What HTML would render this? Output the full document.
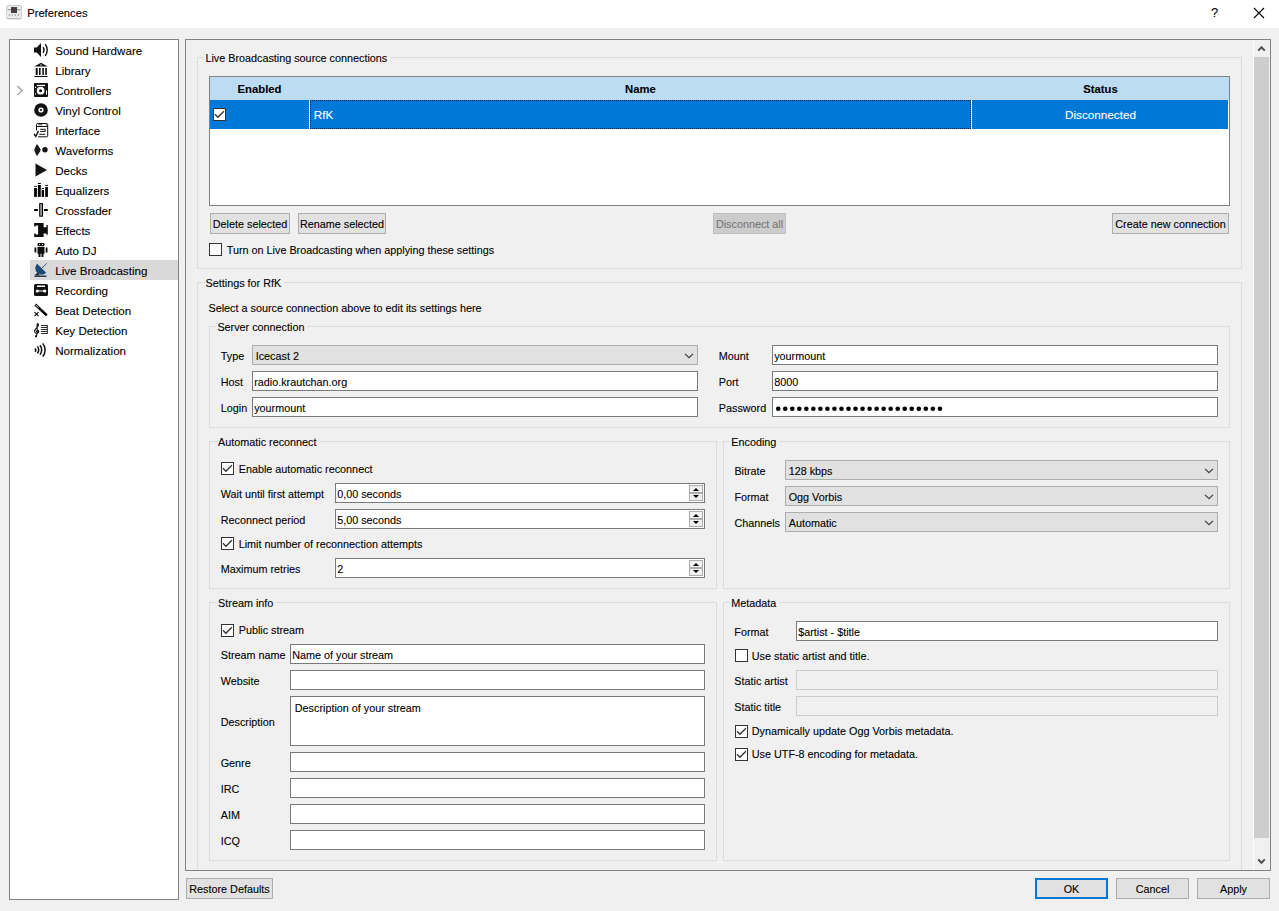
<!DOCTYPE html><html><head><meta charset="utf-8"><style>
html,body{margin:0;padding:0;width:1279px;height:911px;overflow:hidden;background:#f0f0f0;font-family:"Liberation Sans",sans-serif}
.t{position:absolute;white-space:nowrap;line-height:16px;font-size:10.8px;color:#000;-webkit-text-stroke:0.1px currentColor}
.r{position:absolute;box-sizing:border-box}
</style></head><body>
<div class="r" style="left:0px;top:0px;width:1279px;height:28px;background:#fff;"></div>
<svg class="r" style="left:6px;top:5px" width="16" height="15" viewBox="0 0 16 15"><rect x="0.5" y="0.5" width="15" height="13.5" rx="1.5" fill="#ececec" stroke="#d0d0d0"/><path d="M1 13.5h14" stroke="#bdbdbd" stroke-width="1"/><rect x="5" y="2" width="6" height="6" fill="#4a3e42"/><path d="M1.5 4.7h3.5M11 4.7h3.5" stroke="#8a8a8a" stroke-width="1"/><path d="M3.3 9.3v1.6M6.3 9.3v1.6M9.3 9.3v1.6M12.3 9.3v1.6" stroke="#8f8f8f"/></svg>
<div class="t" style="left:27.2px;top:5px;font-size:11.2px;color:#000;">Preferences</div>
<div class="t" style="left:1211.1px;top:5px;font-size:13px;color:#000;">?</div>
<svg class="r" style="left:1253px;top:7px" width="12" height="12" viewBox="0 0 12 12"><path d="M1 1 L11 11 M11 1 L1 11" stroke="#000" stroke-width="1.1"/></svg>
<div class="r" style="left:9px;top:39px;width:170px;height:861px;background:#fff;border:1px solid #828282;"></div>
<div class="r" style="left:30px;top:260px;width:148px;height:20px;background:#d9d9d9;"></div>
<div class="t" style="left:55.2px;top:43px;font-size:11.6px;color:#000;">Sound Hardware</div>
<div class="t" style="left:55.2px;top:63px;font-size:11.6px;color:#000;">Library</div>
<div class="t" style="left:55.2px;top:83px;font-size:11.6px;color:#000;">Controllers</div>
<div class="t" style="left:55.2px;top:103px;font-size:11.6px;color:#000;">Vinyl Control</div>
<div class="t" style="left:55.2px;top:123px;font-size:11.6px;color:#000;">Interface</div>
<div class="t" style="left:55.2px;top:143px;font-size:11.6px;color:#000;">Waveforms</div>
<div class="t" style="left:55.2px;top:163px;font-size:11.6px;color:#000;">Decks</div>
<div class="t" style="left:55.2px;top:183px;font-size:11.6px;color:#000;">Equalizers</div>
<div class="t" style="left:55.2px;top:203px;font-size:11.6px;color:#000;">Crossfader</div>
<div class="t" style="left:55.2px;top:223px;font-size:11.6px;color:#000;">Effects</div>
<div class="t" style="left:55.2px;top:243px;font-size:11.6px;color:#000;">Auto DJ</div>
<div class="t" style="left:55.2px;top:263px;font-size:11.6px;color:#000;">Live Broadcasting</div>
<div class="t" style="left:55.2px;top:283px;font-size:11.6px;color:#000;">Recording</div>
<div class="t" style="left:55.2px;top:303px;font-size:11.6px;color:#000;">Beat Detection</div>
<div class="t" style="left:55.2px;top:323px;font-size:11.6px;color:#000;">Key Detection</div>
<div class="t" style="left:55.2px;top:343px;font-size:11.6px;color:#000;">Normalization</div>
<svg class="r" style="left:16px;top:85px" width="8" height="11" viewBox="0 0 8 11"><path d="M1.5 1 L6 5.5 L1.5 10" fill="none" stroke="#a6a6a6" stroke-width="1.5"/></svg>
<svg class="r" style="left:34px;top:43px;overflow:visible" width="14" height="14" viewBox="0 0 14 14"><path d="M0 4.6h2.7l4.3-4.6v14l-4.3-4.6h-2.7z" fill="#111"/><path d="M9.1 4.2q1.8 2.8 0 5.6M11.3 1.2q3.8 5.8 0 11.6" fill="none" stroke="#111" stroke-width="1.4"/></svg>
<svg class="r" style="left:34px;top:63px;overflow:visible" width="14" height="14" viewBox="0 0 14 14"><path d="M7 -0.2 L0.2 3.6 H13.8 Z" fill="#111"/><rect x="6.3" y="1.4" width="1.4" height="1.2" fill="#ddd"/><rect x="1.7" y="5" width="2" height="7" fill="#111"/><rect x="5" y="5" width="1.6" height="7" fill="#111"/><rect x="8.3" y="5" width="1.6" height="7" fill="#111"/><rect x="11.2" y="5" width="1.7" height="7" fill="#111"/><rect x="0.5" y="13" width="13" height="1" fill="#000"/></svg>
<svg class="r" style="left:34px;top:83px;overflow:visible" width="14" height="14" viewBox="0 0 14 14"><rect x="0" y="0" width="14" height="14" rx="0.8" fill="#111"/><rect x="3" y="1.8" width="8" height="1.3" fill="#fff"/><circle cx="6.6" cy="7.7" r="3.9" fill="#fff"/><circle cx="6.6" cy="7.7" r="1.5" fill="#111"/><rect x="1" y="3.8" width="1" height="1.2" fill="#fff"/><rect x="1" y="10.4" width="1" height="1.3" fill="#fff"/><rect x="12" y="7.4" width="1" height="4.3" fill="#fff"/></svg>
<svg class="r" style="left:34px;top:103px;overflow:visible" width="14" height="14" viewBox="0 0 14 14"><circle cx="7" cy="7" r="6.8" fill="#111"/><circle cx="7" cy="7" r="2.6" fill="#fff"/><circle cx="7" cy="7" r="1.1" fill="#111"/></svg>
<svg class="r" style="left:34px;top:123px;overflow:visible" width="14" height="14" viewBox="0 0 14 14"><path d="M2.5 7.4 V1.5 Q2.5 0.5 3.5 0.5 H12.7 Q13.7 0.5 13.7 1.5 V12.8 Q13.7 13.8 12.7 13.8 H4" fill="none" stroke="#111" stroke-width="1"/><path d="M2.5 3.5h11.2" stroke="#111" stroke-width="1"/><path d="M4.2 1.8h4.2" stroke="#111" stroke-width="0.8"/><circle cx="12.3" cy="1.9" r="0.6" fill="#111"/><path d="M6.2 6.3h5v2.1h-5M5.3 11.3h6" fill="none" stroke="#111" stroke-width="1"/><path d="M0.1 11 L1.8 13.4 L4.5 7.9" fill="none" stroke="#111" stroke-width="1.4"/></svg>
<svg class="r" style="left:34px;top:143px;overflow:visible" width="14" height="14" viewBox="0 0 14 14"><path d="M3 1 C1.4 4 0.3 6 0.4 7 C0.3 8 1.4 10 3 13.2 C4.6 10.5 6.6 8.2 6.7 7 C6.6 5.8 4.6 3.5 3 1 Z" fill="#1a1a1a"/><circle cx="11" cy="6.8" r="2.7" fill="#111"/></svg>
<svg class="r" style="left:34px;top:163px;overflow:visible" width="14" height="14" viewBox="0 0 14 14"><path d="M1.5 0.5L13 7 1.5 13.5z" fill="#111"/></svg>
<svg class="r" style="left:34px;top:183px;overflow:visible" width="14" height="14" viewBox="0 0 14 14"><rect x="0.1" y="5" width="2.8" height="8.9" fill="#000"/><rect x="0.1" y="2.9" width="2.8" height="0.9" fill="#000"/><rect x="3.9" y="2" width="2.9" height="11.9" fill="#000"/><rect x="3.9" y="0" width="2.9" height="1" fill="#000"/><rect x="7.8" y="7.1" width="2.2" height="6.8" fill="#000"/><rect x="7.8" y="5" width="2.2" height="1" fill="#000"/><rect x="6.8" y="6" width="1" height="7.9" fill="#999"/><rect x="11.2" y="4" width="2.7" height="9.9" fill="#000"/><rect x="11.2" y="1.9" width="2.7" height="1" fill="#000"/></svg>
<svg class="r" style="left:34px;top:203px;overflow:visible" width="14" height="14" viewBox="0 0 14 14"><rect x="0.2" y="6" width="3.7" height="2" fill="#000"/><rect x="10" y="6" width="3.8" height="2" fill="#000"/><rect x="5.7" y="0.6" width="2.8" height="12.6" fill="#9a9a9a" stroke="#000" stroke-width="1"/></svg>
<svg class="r" style="left:34px;top:223px;overflow:visible" width="14" height="14" viewBox="0 0 14 14"><path d="M0.2 0 H9.6 V4.2 H12.5 V2 H13.8 V11.7 H12.5 V10.4 H9.6 V13.9 H0.2 V10.4 H1.7 V11.4 H4.1 V2.5 H1.7 V3.6 H0.2 Z" fill="#0d0d0d"/></svg>
<svg class="r" style="left:34px;top:243px;overflow:visible" width="14" height="14" viewBox="0 0 14 14"><rect x="3.5" y="0" width="7" height="3" rx="1" fill="#111"/><rect x="3.5" y="3.8" width="7" height="7" fill="#111"/><rect x="0.5" y="4.5" width="1.8" height="5" fill="#111"/><rect x="11.7" y="4.5" width="1.8" height="5" fill="#111"/><rect x="4.5" y="10" width="2" height="4" fill="#111"/><rect x="7.5" y="10" width="2" height="4" fill="#111"/><rect x="5" y="1" width="1" height="1" fill="#ddd"/><rect x="8" y="1" width="1" height="1" fill="#ddd"/></svg>
<svg class="r" style="left:34px;top:263px;overflow:visible" width="14" height="14" viewBox="0 0 14 14"><path d="M3.2 0.8 A6.3 6.3 0 0 0 12.2 9.8 Z" fill="#1b4a77"/><path d="M7.7 5.3 L12.8 0.3" stroke="#3a4a5a" stroke-width="0.9"/><path d="M0.5 13.2h12" stroke="#152535" stroke-width="1.3"/><path d="M0.5 12.6 L3.5 9.6 L6 12.6 z" fill="#152535"/></svg>
<svg class="r" style="left:34px;top:283px;overflow:visible" width="14" height="14" viewBox="0 0 14 14"><rect x="0" y="1" width="14" height="12" rx="1.5" fill="#111"/><rect x="3" y="2.5" width="8" height="1.5" fill="#fff"/><circle cx="3.3" cy="8" r="1.6" fill="#fff"/><circle cx="10.7" cy="8" r="1.6" fill="#fff"/><rect x="4" y="7.5" width="6" height="1" fill="#fff"/></svg>
<svg class="r" style="left:34px;top:303px;overflow:visible" width="14" height="14" viewBox="0 0 14 14"><path d="M1.2 1.5 L12.8 12.4" stroke="#000" stroke-width="2.6"/><path d="M1.6 1.9 L4.6 4.7" stroke="#fff" stroke-width="0.9"/><path d="M0.5 9.2 L4.5 13.2 M4.5 9.2 L0.5 13.2" stroke="#000" stroke-width="1.1"/></svg>
<svg class="r" style="left:34px;top:323px;overflow:visible" width="14" height="14" viewBox="0 0 14 14"><path d="M6.9 2.5h6.6M6.9 4.5h6.6M6.9 6.5h6.6M6.9 8.5h6.6M6.9 10.5h6.6M13.3 2v9" stroke="#1a1a1a" stroke-width="0.9"/><path d="M2.3 14.2 C3.6 10 3.4 5 3 3 C2.8 0.8 4.3 -0.3 4.5 1.8 C4.7 4 0.4 5.5 0.6 8.5 C0.8 11 4.8 11 4.7 8.4 C4.6 6.8 2.4 6.9 2.5 8.6" fill="none" stroke="#111" stroke-width="1.1"/><circle cx="1.9" cy="13.3" r="1" fill="#111"/></svg>
<svg class="r" style="left:34px;top:343px;overflow:visible" width="14" height="14" viewBox="0 0 14 14"><path d="M1 5.4 q1.6 1.65 0 3.3 M3.4 3.4 q2.6 3.5 0 7 M6 2.3 q3.4 4.7 0 9.4 M8.8 0.3 q4.6 6.7 0 13.4" fill="none" stroke="#111" stroke-width="1.5"/></svg>
<div class="r" style="left:185px;top:39px;width:1086px;height:832px;background:#f0f0f0;border:1px solid #828282;"></div>
<div class="r" style="left:1253px;top:40px;width:1px;height:830px;background:#fff;"></div>
<div class="r" style="left:1254px;top:57px;width:15px;height:781px;background:#cdcdcd;"></div>
<svg class="r" style="left:1257px;top:45px" width="9" height="7" viewBox="0 0 9 7"><path d="M1.2 5.6 L4.5 2.2 L7.8 5.6" fill="none" stroke="#505050" stroke-width="2"/></svg>
<svg class="r" style="left:1257px;top:858px" width="9" height="7" viewBox="0 0 9 7"><path d="M1.2 1.4 L4.5 4.8 L7.8 1.4" fill="none" stroke="#505050" stroke-width="2"/></svg>
<div class="r" style="left:197px;top:57px;width:1045px;height:212px;background:none;border:1px solid #dcdcdc;"></div>
<div class="t" style="left:204.4px;top:50px;font-size:10.8px;background:#f0f0f0;padding:0 3px 0 1px">Live Broadcasting source connections</div>
<div class="r" style="left:209px;top:76px;width:1021px;height:130px;background:#fff;border:1px solid #828282;"></div>
<div class="r" style="left:210px;top:77px;width:1019px;height:23px;background:#bcdcf4;"></div>
<div class="r" style="left:210px;top:100px;width:1018px;height:29px;background:#0078d7;"></div>
<div class="r" style="left:309px;top:100px;width:1px;height:29px;background:#e8f2fb;"></div>
<div class="r" style="left:971px;top:100px;width:1px;height:29px;background:#e8f2fb;"></div>
<div class="r" style="left:310px;top:100px;width:661px;height:29px;border:1px dotted #10243a"></div>
<div class="t" style="left:210px;width:99px;text-align:center;top:81px;font-size:11.3px;color:#000;font-weight:bold;">Enabled</div>
<div class="t" style="left:310px;width:661px;text-align:center;top:81px;font-size:11.3px;color:#000;font-weight:bold;">Name</div>
<div class="t" style="left:972px;width:257px;text-align:center;top:81px;font-size:11.3px;color:#000;font-weight:bold;">Status</div>
<svg class="r" style="left:213px;top:108px" width="13" height="13" viewBox="0 0 13 13"><rect x="0.5" y="0.5" width="12" height="12" fill="#fff" stroke="#333"/><path d="M2 6.3 L4.9 9.3 L10.9 3.2" fill="none" stroke="#333" stroke-width="1.3"/></svg>
<div class="t" style="left:313.7px;top:107px;font-size:11.7px;color:#fff;">RfK</div>
<div class="t" style="left:972px;width:257px;text-align:center;top:107px;font-size:11.7px;color:#fff;">Disconnected</div>
<div class="r" style="left:210px;top:213px;width:80px;height:21px;background:#e1e1e1;border:1px solid #adadad;"></div>
<div class="t" style="left:210px;width:80px;text-align:center;top:216px;font-size:10.8px;color:#000;">Delete selected</div>
<div class="r" style="left:298px;top:213px;width:88px;height:21px;background:#e1e1e1;border:1px solid #adadad;"></div>
<div class="t" style="left:298px;width:88px;text-align:center;top:216px;font-size:10.8px;color:#000;">Rename selected</div>
<div class="r" style="left:713px;top:213px;width:73px;height:21px;background:#cccccc;border:1px solid #bfbfbf;"></div>
<div class="t" style="left:713px;width:73px;text-align:center;top:216px;font-size:10.8px;color:#767676;">Disconnect all</div>
<div class="r" style="left:1112px;top:213px;width:117px;height:21px;background:#e1e1e1;border:1px solid #adadad;"></div>
<div class="t" style="left:1112px;width:117px;text-align:center;top:216px;font-size:10.8px;color:#000;">Create new connection</div>
<svg class="r" style="left:209px;top:243px" width="13" height="13" viewBox="0 0 13 13"><rect x="0.5" y="0.5" width="12" height="12" fill="#fff" stroke="#333"/></svg>
<div class="t" style="left:226.8px;top:242px;font-size:10.8px;color:#000;">Turn on Live Broadcasting when applying these settings</div>
<div class="r" style="left:197px;top:282px;width:1045px;height:588px;background:none;border:1px solid #dcdcdc;border-bottom:none;"></div>
<div class="t" style="left:204.6px;top:275px;font-size:10.8px;background:#f0f0f0;padding:0 3px 0 1px">Settings for RfK</div>
<div class="t" style="left:208.5px;top:300px;font-size:10.8px;color:#000;">Select a source connection above to edit its settings here</div>
<div class="r" style="left:209px;top:326px;width:1021px;height:102px;background:none;border:1px solid #dcdcdc;"></div>
<div class="t" style="left:216.4px;top:319px;font-size:10.8px;background:#f0f0f0;padding:0 3px 0 1px">Server connection</div>
<div class="t" style="left:220.8px;top:348px;font-size:10.8px;color:#000;">Type</div>
<div class="r" style="left:252px;top:345px;width:446px;height:20px;background:#e1e1e1;border:1px solid #adadad;"></div>
<div class="t" style="left:255.7px;top:348px;font-size:10.8px;color:#000;">Icecast 2</div>
<svg class="r" style="left:684px;top:353px" width="10" height="6" viewBox="0 0 10 6"><path d="M1 0.9 L5 4.7 L9 0.9" fill="none" stroke="#404040" stroke-width="1.3"/></svg>
<div class="t" style="left:220.8px;top:374px;font-size:10.8px;color:#000;">Host</div>
<div class="r" style="left:252px;top:371px;width:446px;height:20px;background:#fff;border:1px solid #7a7a7a;"></div>
<div class="t" style="left:254.2px;top:374px;font-size:10.8px;color:#000;">radio.krautchan.org</div>
<div class="t" style="left:220.8px;top:400px;font-size:10.8px;color:#000;">Login</div>
<div class="r" style="left:252px;top:397px;width:446px;height:20px;background:#fff;border:1px solid #7a7a7a;"></div>
<div class="t" style="left:254.2px;top:400px;font-size:10.8px;color:#000;">yourmount</div>
<div class="t" style="left:718.8px;top:348px;font-size:10.8px;color:#000;">Mount</div>
<div class="r" style="left:772px;top:345px;width:446px;height:20px;background:#fff;border:1px solid #7a7a7a;"></div>
<div class="t" style="left:774.2px;top:348px;font-size:10.8px;color:#000;">yourmount</div>
<div class="t" style="left:718.8px;top:374px;font-size:10.8px;color:#000;">Port</div>
<div class="r" style="left:772px;top:371px;width:446px;height:20px;background:#fff;border:1px solid #7a7a7a;"></div>
<div class="t" style="left:774.2px;top:374px;font-size:10.8px;color:#000;">8000</div>
<div class="t" style="left:718.8px;top:400px;font-size:10.8px;color:#000;">Password</div>
<div class="r" style="left:772px;top:397px;width:446px;height:20px;background:#fff;border:1px solid #7a7a7a;"></div>
<svg class="r" style="left:0;top:0" width="1279" height="911"><circle cx="778.20" cy="408.7" r="2.3" fill="#000"/><circle cx="785.23" cy="408.7" r="2.3" fill="#000"/><circle cx="792.26" cy="408.7" r="2.3" fill="#000"/><circle cx="799.29" cy="408.7" r="2.3" fill="#000"/><circle cx="806.32" cy="408.7" r="2.3" fill="#000"/><circle cx="813.35" cy="408.7" r="2.3" fill="#000"/><circle cx="820.38" cy="408.7" r="2.3" fill="#000"/><circle cx="827.41" cy="408.7" r="2.3" fill="#000"/><circle cx="834.44" cy="408.7" r="2.3" fill="#000"/><circle cx="841.47" cy="408.7" r="2.3" fill="#000"/><circle cx="848.50" cy="408.7" r="2.3" fill="#000"/><circle cx="855.53" cy="408.7" r="2.3" fill="#000"/><circle cx="862.56" cy="408.7" r="2.3" fill="#000"/><circle cx="869.59" cy="408.7" r="2.3" fill="#000"/><circle cx="876.62" cy="408.7" r="2.3" fill="#000"/><circle cx="883.65" cy="408.7" r="2.3" fill="#000"/><circle cx="890.68" cy="408.7" r="2.3" fill="#000"/><circle cx="897.71" cy="408.7" r="2.3" fill="#000"/><circle cx="904.74" cy="408.7" r="2.3" fill="#000"/><circle cx="911.77" cy="408.7" r="2.3" fill="#000"/><circle cx="918.80" cy="408.7" r="2.3" fill="#000"/><circle cx="925.83" cy="408.7" r="2.3" fill="#000"/><circle cx="932.86" cy="408.7" r="2.3" fill="#000"/><circle cx="939.89" cy="408.7" r="2.3" fill="#000"/></svg>
<div class="r" style="left:209px;top:441px;width:508px;height:148px;background:none;border:1px solid #dcdcdc;"></div>
<div class="t" style="left:217.1px;top:434px;font-size:10.8px;background:#f0f0f0;padding:0 3px 0 1px">Automatic reconnect</div>
<svg class="r" style="left:221px;top:462px" width="13" height="13" viewBox="0 0 13 13"><rect x="0.5" y="0.5" width="12" height="12" fill="#fff" stroke="#333"/><path d="M2 6.3 L4.9 9.3 L10.9 3.2" fill="none" stroke="#333" stroke-width="1.3"/></svg>
<div class="t" style="left:238.7px;top:461px;font-size:10.8px;color:#000;">Enable automatic reconnect</div>
<div class="t" style="left:220.7px;top:486px;font-size:10.8px;color:#000;">Wait until first attempt</div>
<div class="r" style="left:335px;top:483px;width:370px;height:20px;background:#fff;border:1px solid #7a7a7a;"></div>
<div class="t" style="left:337.2px;top:486px;font-size:10.8px;color:#000;">0,00 seconds</div>
<div class="r" style="left:689px;top:485px;width:14px;height:8px;background:#f0f0f0;border:1px solid #adadad;box-sizing:border-box"></div>
<div class="r" style="left:689px;top:493px;width:14px;height:8px;background:#f0f0f0;border:1px solid #adadad;box-sizing:border-box"></div>
<svg class="r" style="left:689px;top:485px" width="14" height="16" viewBox="0 0 14 16"><path d="M4 6 L7 3 L10 6 Z" fill="#000"/><path d="M4 10 L7 13 L10 10 Z" fill="#000"/></svg>
<div class="t" style="left:220.7px;top:512px;font-size:10.8px;color:#000;">Reconnect period</div>
<div class="r" style="left:335px;top:509px;width:370px;height:20px;background:#fff;border:1px solid #7a7a7a;"></div>
<div class="t" style="left:337.2px;top:512px;font-size:10.8px;color:#000;">5,00 seconds</div>
<div class="r" style="left:689px;top:511px;width:14px;height:8px;background:#f0f0f0;border:1px solid #adadad;box-sizing:border-box"></div>
<div class="r" style="left:689px;top:519px;width:14px;height:8px;background:#f0f0f0;border:1px solid #adadad;box-sizing:border-box"></div>
<svg class="r" style="left:689px;top:511px" width="14" height="16" viewBox="0 0 14 16"><path d="M4 6 L7 3 L10 6 Z" fill="#000"/><path d="M4 10 L7 13 L10 10 Z" fill="#000"/></svg>
<svg class="r" style="left:221px;top:537px" width="13" height="13" viewBox="0 0 13 13"><rect x="0.5" y="0.5" width="12" height="12" fill="#fff" stroke="#333"/><path d="M2 6.3 L4.9 9.3 L10.9 3.2" fill="none" stroke="#333" stroke-width="1.3"/></svg>
<div class="t" style="left:238.7px;top:536px;font-size:10.8px;color:#000;">Limit number of reconnection attempts</div>
<div class="t" style="left:220.7px;top:561px;font-size:10.8px;color:#000;">Maximum retries</div>
<div class="r" style="left:335px;top:558px;width:370px;height:20px;background:#fff;border:1px solid #7a7a7a;"></div>
<div class="t" style="left:337.2px;top:561px;font-size:10.8px;color:#000;">2</div>
<div class="r" style="left:689px;top:560px;width:14px;height:8px;background:#f0f0f0;border:1px solid #adadad;box-sizing:border-box"></div>
<div class="r" style="left:689px;top:568px;width:14px;height:8px;background:#f0f0f0;border:1px solid #adadad;box-sizing:border-box"></div>
<svg class="r" style="left:689px;top:560px" width="14" height="16" viewBox="0 0 14 16"><path d="M4 6 L7 3 L10 6 Z" fill="#000"/><path d="M4 10 L7 13 L10 10 Z" fill="#000"/></svg>
<div class="r" style="left:723px;top:441px;width:507px;height:148px;background:none;border:1px solid #dcdcdc;"></div>
<div class="t" style="left:730.3px;top:434px;font-size:10.8px;background:#f0f0f0;padding:0 3px 0 1px">Encoding</div>
<div class="t" style="left:734.4px;top:463px;font-size:10.8px;color:#000;">Bitrate</div>
<div class="r" style="left:785px;top:460px;width:433px;height:20px;background:#e1e1e1;border:1px solid #adadad;"></div>
<div class="t" style="left:788.7px;top:463px;font-size:10.8px;color:#000;">128 kbps</div>
<svg class="r" style="left:1204px;top:468px" width="10" height="6" viewBox="0 0 10 6"><path d="M1 0.9 L5 4.7 L9 0.9" fill="none" stroke="#404040" stroke-width="1.3"/></svg>
<div class="t" style="left:734.4px;top:489px;font-size:10.8px;color:#000;">Format</div>
<div class="r" style="left:785px;top:486px;width:433px;height:20px;background:#e1e1e1;border:1px solid #adadad;"></div>
<div class="t" style="left:788.7px;top:489px;font-size:10.8px;color:#000;">Ogg Vorbis</div>
<svg class="r" style="left:1204px;top:494px" width="10" height="6" viewBox="0 0 10 6"><path d="M1 0.9 L5 4.7 L9 0.9" fill="none" stroke="#404040" stroke-width="1.3"/></svg>
<div class="t" style="left:734.4px;top:515px;font-size:10.8px;color:#000;">Channels</div>
<div class="r" style="left:785px;top:512px;width:433px;height:20px;background:#e1e1e1;border:1px solid #adadad;"></div>
<div class="t" style="left:788.7px;top:515px;font-size:10.8px;color:#000;">Automatic</div>
<svg class="r" style="left:1204px;top:520px" width="10" height="6" viewBox="0 0 10 6"><path d="M1 0.9 L5 4.7 L9 0.9" fill="none" stroke="#404040" stroke-width="1.3"/></svg>
<div class="r" style="left:209px;top:602px;width:508px;height:259px;background:none;border:1px solid #dcdcdc;"></div>
<div class="t" style="left:217.1px;top:595px;font-size:10.8px;background:#f0f0f0;padding:0 3px 0 1px">Stream info</div>
<svg class="r" style="left:221px;top:624px" width="13" height="13" viewBox="0 0 13 13"><rect x="0.5" y="0.5" width="12" height="12" fill="#fff" stroke="#333"/><path d="M2 6.3 L4.9 9.3 L10.9 3.2" fill="none" stroke="#333" stroke-width="1.3"/></svg>
<div class="t" style="left:238.7px;top:622px;font-size:10.8px;color:#000;">Public stream</div>
<div class="t" style="left:220.7px;top:647px;font-size:10.8px;color:#000;">Stream name</div>
<div class="r" style="left:290px;top:644px;width:415px;height:20px;background:#fff;border:1px solid #7a7a7a;"></div>
<div class="t" style="left:292.2px;top:647px;font-size:10.8px;color:#000;">Name of your stream</div>
<div class="t" style="left:220.7px;top:673px;font-size:10.8px;color:#000;">Website</div>
<div class="r" style="left:290px;top:670px;width:415px;height:20px;background:#fff;border:1px solid #7a7a7a;"></div>
<div class="t" style="left:220.7px;top:714px;font-size:10.8px;color:#000;">Description</div>
<div class="r" style="left:290px;top:696px;width:415px;height:50px;background:#fff;border:1px solid #7a7a7a;"></div>
<div class="t" style="left:294.8px;top:700px;font-size:10.8px;color:#000;">Description of your stream</div>
<div class="t" style="left:220.7px;top:755px;font-size:10.8px;color:#000;">Genre</div>
<div class="r" style="left:290px;top:752px;width:415px;height:20px;background:#fff;border:1px solid #7a7a7a;"></div>
<div class="t" style="left:220.7px;top:781px;font-size:10.8px;color:#000;">IRC</div>
<div class="r" style="left:290px;top:778px;width:415px;height:20px;background:#fff;border:1px solid #7a7a7a;"></div>
<div class="t" style="left:220.7px;top:807px;font-size:10.8px;color:#000;">AIM</div>
<div class="r" style="left:290px;top:804px;width:415px;height:20px;background:#fff;border:1px solid #7a7a7a;"></div>
<div class="t" style="left:220.7px;top:833px;font-size:10.8px;color:#000;">ICQ</div>
<div class="r" style="left:290px;top:830px;width:415px;height:20px;background:#fff;border:1px solid #7a7a7a;"></div>
<div class="r" style="left:723px;top:602px;width:507px;height:259px;background:none;border:1px solid #dcdcdc;"></div>
<div class="t" style="left:730.3px;top:595px;font-size:10.8px;background:#f0f0f0;padding:0 3px 0 1px">Metadata</div>
<div class="t" style="left:734.3px;top:624px;font-size:10.8px;color:#000;">Format</div>
<div class="r" style="left:796px;top:621px;width:422px;height:20px;background:#fff;border:1px solid #7a7a7a;"></div>
<div class="t" style="left:798.2px;top:624px;font-size:10.8px;color:#000;">$artist - $title</div>
<svg class="r" style="left:735px;top:649px" width="13" height="13" viewBox="0 0 13 13"><rect x="0.5" y="0.5" width="12" height="12" fill="#fff" stroke="#333"/></svg>
<div class="t" style="left:751.8px;top:648px;font-size:10.8px;color:#000;">Use static artist and title.</div>
<div class="t" style="left:734.3px;top:673px;font-size:10.8px;color:#000;">Static artist</div>
<div class="r" style="left:796px;top:670px;width:422px;height:20px;background:#f0f0f0;border:1px solid #cccccc;"></div>
<div class="t" style="left:734.3px;top:699px;font-size:10.8px;color:#000;">Static title</div>
<div class="r" style="left:796px;top:696px;width:422px;height:20px;background:#f0f0f0;border:1px solid #cccccc;"></div>
<svg class="r" style="left:735px;top:725px" width="13" height="13" viewBox="0 0 13 13"><rect x="0.5" y="0.5" width="12" height="12" fill="#fff" stroke="#333"/><path d="M2 6.3 L4.9 9.3 L10.9 3.2" fill="none" stroke="#333" stroke-width="1.3"/></svg>
<div class="t" style="left:751.8px;top:723px;font-size:10.8px;color:#000;">Dynamically update Ogg Vorbis metadata.</div>
<svg class="r" style="left:735px;top:748px" width="13" height="13" viewBox="0 0 13 13"><rect x="0.5" y="0.5" width="12" height="12" fill="#fff" stroke="#333"/><path d="M2 6.3 L4.9 9.3 L10.9 3.2" fill="none" stroke="#333" stroke-width="1.3"/></svg>
<div class="t" style="left:751.8px;top:746px;font-size:10.8px;color:#000;">Use UTF-8 encoding for metadata.</div>
<div class="r" style="left:186px;top:878px;width:87px;height:21px;background:#e1e1e1;border:1px solid #adadad;"></div>
<div class="t" style="left:186px;width:87px;text-align:center;top:881px;font-size:10.8px;color:#000;">Restore Defaults</div>
<div class="r" style="left:1035px;top:878px;width:73px;height:21px;background:#e1e1e1;border:2px solid #0078d7"></div>
<div class="t" style="left:1035px;width:73px;text-align:center;top:881px;font-size:10.8px;color:#000;">OK</div>
<div class="r" style="left:1116px;top:878px;width:73px;height:21px;background:#e1e1e1;border:1px solid #adadad;"></div>
<div class="t" style="left:1116px;width:73px;text-align:center;top:881px;font-size:10.8px;color:#000;">Cancel</div>
<div class="r" style="left:1197px;top:878px;width:73px;height:21px;background:#e1e1e1;border:1px solid #adadad;"></div>
<div class="t" style="left:1197px;width:73px;text-align:center;top:881px;font-size:10.8px;color:#000;">Apply</div>
</body></html>
